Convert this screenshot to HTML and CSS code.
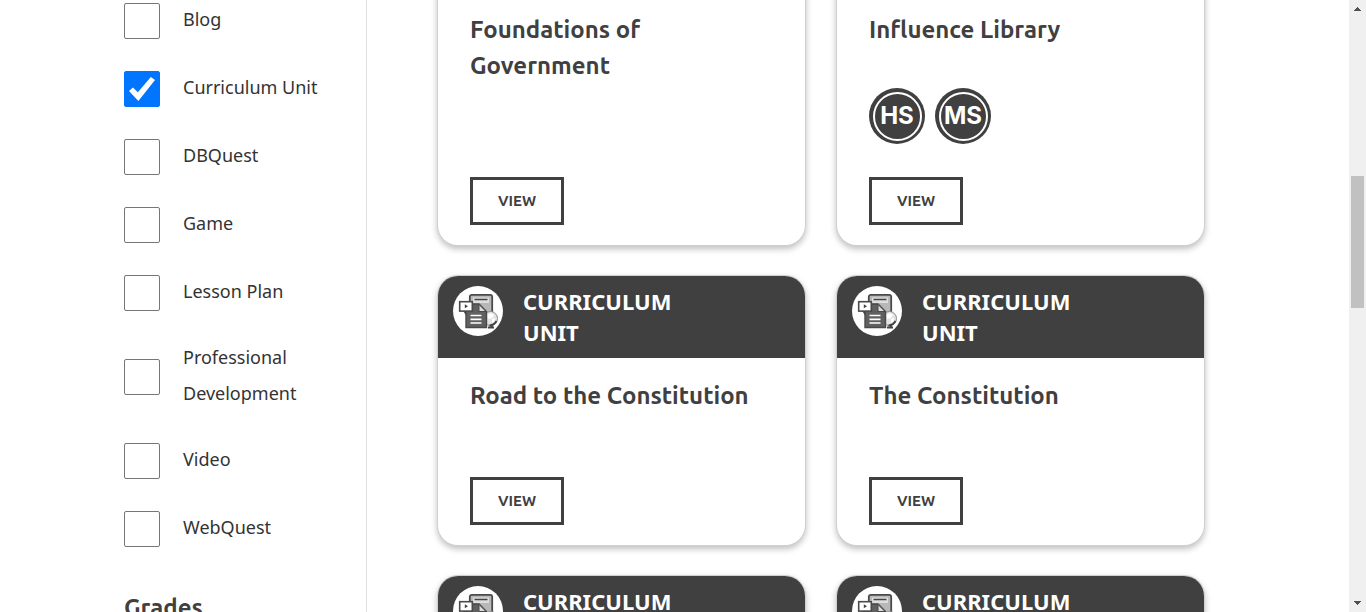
FILE: index.html
```html
<!DOCTYPE html>
<html lang="en">
<head>
<meta charset="utf-8">
<title>Curriculum Library</title>
<link rel="stylesheet" href="styles.css">
</head>
<body>
<svg class="sprite" aria-hidden="true">
  <symbol id="unit" viewBox="0 0 50 50">
    <circle cx="25" cy="25" r="25" fill="#fff"/>
    <rect x="16.8" y="8.8" width="22.4" height="24" rx="2" fill="#b8b8b8" stroke="#4a4a4a" stroke-width="1.8"/>
    <path d="M20 11.500h16v5.500H20z" fill="#dedede"/>
    <path d="M21.500 13.500h13" stroke="#444" stroke-width="1.600"/>
    <circle cx="37.500" cy="32.500" r="7" fill="#e4e4e4" stroke="#888" stroke-width="1"/>
    <path d="M34 29l4-2 3 2-2 3-4 1zM39 33l3-1-1 4-2 1z" fill="#fff"/>
    <path d="M43.500 35q-2 4-7 4.500M39 38v3.500M35 41.500h6" fill="none" stroke="#444" stroke-width="1.800"/>
    <path d="M13 18h13l7.500 7.500v16H13z" fill="#606060" stroke="#4a4a4a" stroke-width="1.400"/>
    <path d="M26 18.500v7h7z" fill="#ddd" stroke="#4a4a4a"/>
    <path d="M17.500 29.500h11M17.500 33.300h11M17.500 37h11" stroke="#fff" stroke-width="1.700"/>
    <path d="M8 25h5v4.500L10.300 25z" fill="#444"/>
    <rect x="6.700" y="15.700" width="12.600" height="9.400" fill="#fff" stroke="#4a4a4a" stroke-width="1.600"/>
    <path d="M11.800 18.300l3.200 2-3.200 2z" fill="#444"/>
  </symbol>
</svg>
<div class="viewport">
  <div class="page">
    <aside class="filters">
      <form>
        <label class="option"><input type="checkbox"><span>Blog</span></label>
        <label class="option"><input type="checkbox" checked><span>Curriculum Unit</span></label>
        <label class="option"><input type="checkbox"><span>DBQuest</span></label>
        <label class="option"><input type="checkbox"><span>Game</span></label>
        <label class="option"><input type="checkbox"><span>Lesson Plan</span></label>
        <label class="option"><input type="checkbox"><span>Professional Development</span></label>
        <label class="option"><input type="checkbox"><span>Video</span></label>
        <label class="option"><input type="checkbox"><span>WebQuest</span></label>
        <h2>Grades</h2>
      </form>
    </aside>
    <main class="cards">
      <article class="card">
        <header><svg class="icon"><use href="#unit"/></svg></header>
        <div class="body"><h3>Foundations of Government</h3><a class="view" href="#">VIEW</a></div>
      </article>
      <article class="card">
        <header><svg class="icon"><use href="#unit"/></svg></header>
        <div class="body"><h3>Influence Library</h3>
          <div class="levels"><span class="level"><b>HS</b></span><span class="level"><b>MS</b></span></div>
          <a class="view" href="#">VIEW</a></div>
      </article>
      <article class="card">
        <header><svg class="icon"><use href="#unit"/></svg><span>CURRICULUM UNIT</span></header>
        <div class="body"><h3>Road to the Constitution</h3><a class="view" href="#">VIEW</a></div>
      </article>
      <article class="card">
        <header><svg class="icon"><use href="#unit"/></svg><span>CURRICULUM UNIT</span></header>
        <div class="body"><h3>The Constitution</h3><a class="view" href="#">VIEW</a></div>
      </article>
      <article class="card">
        <header><svg class="icon"><use href="#unit"/></svg><span>CURRICULUM UNIT</span></header>
        <div class="body"></div>
      </article>
      <article class="card">
        <header><svg class="icon"><use href="#unit"/></svg><span>CURRICULUM UNIT</span></header>
        <div class="body"></div>
      </article>
    </main>
  </div>
  <div class="scrollbar" aria-hidden="true">
    <svg class="arrow" viewBox="0 0 7 4"><path d="M3 0h1v1h1v1h1v1h1v1H0V3h1V2h1V1h1z"/></svg>
    <div class="track"><div class="thumb"></div></div>
    <svg class="arrow" viewBox="0 0 7 4"><path d="M0 0h7v1H6v1H5v1H4v1H3V3H2V2H1V1H0z"/></svg>
  </div>
</div>
</body>
</html>
```

FILE: styles.css
```css
* { box-sizing: border-box; }
body {
  margin: 0;
  background: #fff;
  color: #333;
  font-family: "Noto Sans", "Open Sans", sans-serif;
  font-size: 18px;
  line-height: 36px;
}
h2, h3 {
  margin: 0;
  color: #404041;
  font-family: Ubuntu, "Open Sans", "Noto Sans", sans-serif;
  font-size: 24px;
  font-weight: 700;
  line-height: 36px;
}
.sprite { display: none; }
.viewport {
  display: flex;
  height: 100vh;
  overflow: hidden;
}
.page {
  flex: 1;
  display: grid;
  grid-template-columns: 243px 1fr;
  column-gap: 71px;
  padding: 0 145px 0 124px;
}
.filters { border-right: 1px solid #dfdfdf; }
.filters form {
  display: flex;
  flex-direction: column;
  gap: 28px;
  margin-top: -1px;
}
.filters h2 { margin-top: 15px; }
.option {
  display: flex;
  align-items: center;
  gap: 23px;
  min-height: 40px;
  padding-right: 48px;
}
.option input {
  appearance: none;
  flex: none;
  display: grid;
  place-items: center;
  width: 36px;
  height: 36px;
  margin: 4px 0 0;
  border: 1px solid #767676;
  border-radius: 2px;
  background: #fff;
}
.option input:checked { border-color: #0075ff; background: #0075ff; }
.option input:checked::before {
  content: "";
  width: 26px;
  height: 24px;
  background: #fff;
  clip-path: polygon(0 58%, 15% 44%, 34% 64%, 84% 0, 100% 12%, 36% 100%);
}
.cards {
  display: grid;
  grid-template-columns: 1fr 1fr;
  grid-auto-rows: minmax(269px, auto);
  gap: 31px 32px;
  margin-top: -90px;
  align-content: start;
}
.card {
  display: flex;
  flex-direction: column;
  overflow: hidden;
  border-radius: 20px;
  background: #fff;
  box-shadow: 0 0 0 1px #d0d0d0, 0 3px 6px 1px rgba(0, 0, 0, 0.25);
}
.card header {
  display: flex;
  gap: 20px;
  min-height: 82px;
  padding: 10px 80px 10px 15px;
  background: #404041;
  color: #fff;
  font-size: 22px;
  font-weight: 700;
  line-height: 31px;
}
.icon { flex: none; width: 50px; height: 50px; }
.body {
  flex: 1;
  display: flex;
  flex-direction: column;
  align-items: flex-start;
  padding: 20px 32px;
}
.levels {
  display: flex;
  gap: 10px;
  margin: 40px 0 33px;
}
.body h3 { max-width: 290px; }
.card:first-child h3 { max-width: 240px; }
.level {
  display: grid;
  place-items: center;
  width: 56px;
  height: 56px;
  border-radius: 50%;
  background: #404041;
}
.level b {
  display: grid;
  place-items: center;
  width: 49px;
  height: 49px;
  border: 2px solid #fff;
  border-radius: 50%;
  color: #fff;
  font: 700 24px/44px "Inter", sans-serif;
}
.view {
  margin-top: auto;
  padding: 0 25px;
  border: 3px solid #404041;
  color: #404041;
  font: 700 15px/42px Ubuntu, "Noto Sans", sans-serif;
  text-decoration: none;
}
.scrollbar {
  flex: none;
  display: flex;
  flex-direction: column;
  align-items: center;
  width: 17px;
  padding: 7px 2px;
  background: #f0f0f0;
}
.arrow { width: 7px; height: 4px; fill: #505050; }
.track {
  flex: 1;
  width: 13px;
  padding-top: 165px;
}
.thumb { height: 132px; background: #c1c1c1; }
```
